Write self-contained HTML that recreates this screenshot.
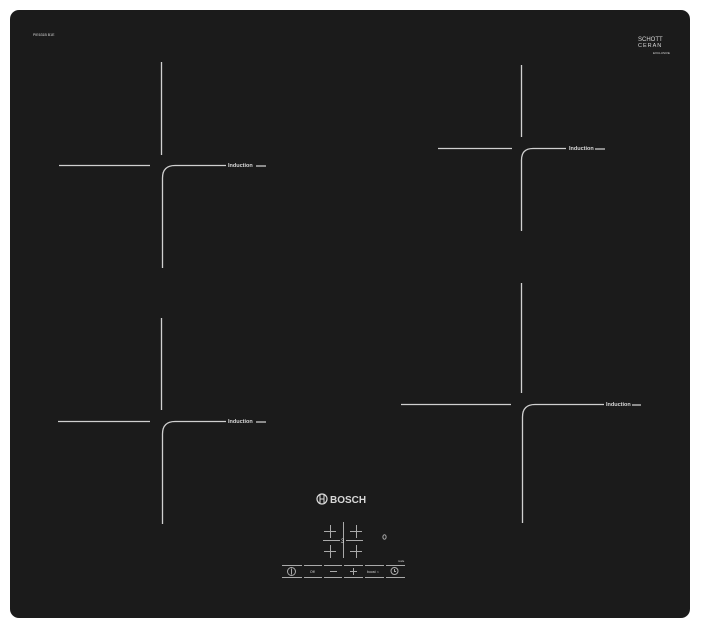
<!DOCTYPE html>
<html><head><meta charset="utf-8"><style>
html,body{margin:0;padding:0;background:#fff;width:701px;height:628px;overflow:hidden}
svg{display:block}
text{font-family:"Liberation Sans",sans-serif;fill:#d8d8d8}
</style></head><body>
<svg width="701" height="628" viewBox="0 0 701 628">
<rect x="10" y="10" width="680" height="608" rx="9" fill="#1b1b1b"/>
<g stroke="#d0d0d0" stroke-width="1.3" fill="none">
<!-- zone 1 -->
<path d="M161.5 62V155M59 165.5H150M162.5 268V178Q162.5 165.5 175 165.5H226M256 166H266"/>
<!-- zone 2 -->
<path d="M521.5 65V137M438 148.5H512M521.5 231V160Q521.5 148.5 533 148.5H566M595 149H605"/>
<!-- zone 3 -->
<path d="M161.5 318V410M58 421.5H150M162.5 524V434Q162.5 421.5 175 421.5H226M256 422H266"/>
<!-- zone 4 -->
<path d="M521.5 283V393M401 404.5H511M522.5 523V417Q522.5 404.5 535 404.5H604M632 405H641"/>
</g>
<g font-size="5.5" font-weight="bold">
<text x="228" y="167">Induction</text>
<text x="569" y="150">Induction</text>
<text x="228" y="423">Induction</text>
<text x="606" y="406">Induction</text>
</g>
<text x="33" y="36" font-size="3.5">PIE631B B1E</text>
<text x="638" y="41" font-size="6" fill="#ddd">SCHOTT</text>
<text x="638" y="47" font-size="5.5" letter-spacing="1">CERAN</text>
<text x="653" y="54" font-size="3">EXCLUSIVE</text>
<!-- bosch logo -->
<circle cx="322" cy="499" r="5" stroke="#ddd" stroke-width="1.2" fill="none"/>
<path d="M320 495V503M324 495V503M320 499H324" stroke="#ddd" stroke-width="1"/>
<text x="330" y="503" font-size="10" font-weight="bold" fill="#e6e6e6">BOSCH</text>
<!-- controls -->
<g stroke="#aaa" stroke-width="1" fill="none">
<path d="M343.5 522V558M323 540.5H340M346 540.5H363"/>
<path d="M324 531.5H336M330.5 525V538M350 531.5H362M356.5 525V538M324 551.5H336M330.5 545V558M350 551.5H362M356.5 545V558"/>
<path d="M282 565.5H302M304 565.5H322M324 565.5H342M344 565.5H363M365 565.5H384M386 565.5H405"/>
<path d="M282 577.5H302M304 577.5H322M324 577.5H342M344 577.5H363M365 577.5H384M386 577.5H405"/>
<circle cx="291.5" cy="571.5" r="4"/><path d="M291.5 568.5V574.5"/>
<circle cx="394.5" cy="571" r="3.5"/><path d="M394.5 569V571.5H396"/>
<path d="M330 571.5H337M350 571.5H357M353.5 568V575"/>
<ellipse cx="384.5" cy="537" rx="1.6" ry="2.2"/>
</g>
<text x="341" y="543" font-size="6" fill="#aaa">3</text>
<text x="310" y="573" font-size="3.5" fill="#bbb">Off</text>
<text x="367" y="573" font-size="3.5" fill="#bbb">boost ∩</text>
<text x="398" y="562" font-size="2.5" fill="#bbb">mode</text>
</svg>
</body></html>
